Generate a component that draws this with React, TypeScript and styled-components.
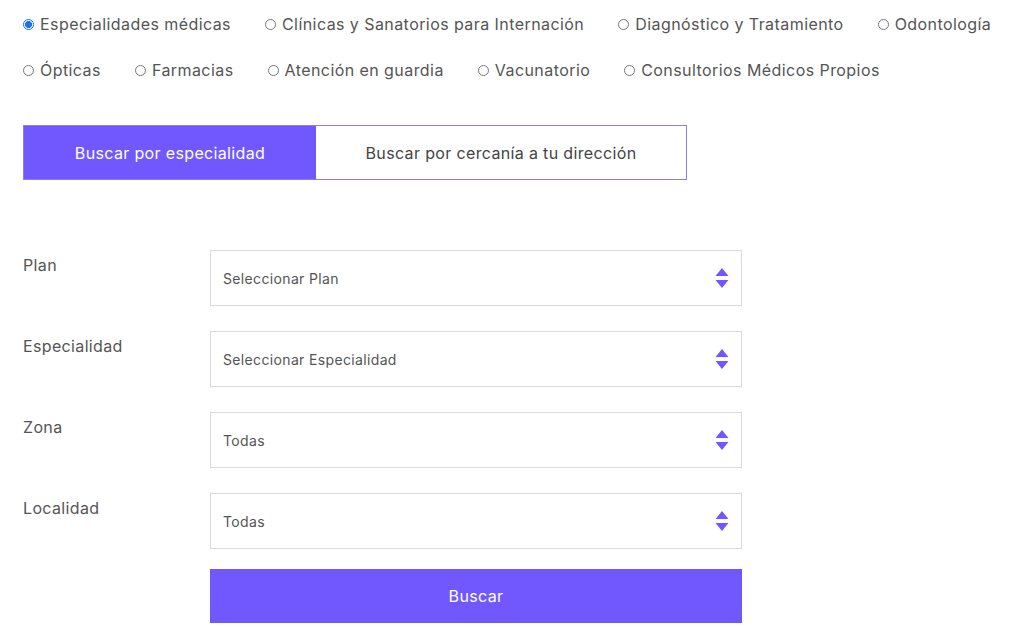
import React from "react";
import styled, { createGlobalStyle } from "styled-components";

const PURPLE = "#7058fe";

const Global = createGlobalStyle`
  html, body { margin: 0; padding: 0; background: #fff; }
  body { font-family: Inter, "Noto Sans", sans-serif; color: #555; letter-spacing: 0.35px; }
`;

const Page = styled.div`
  padding: 1px 23px 0 23px;
  width: 1024px;
  box-sizing: border-box;
`;

const RadioGroup = styled.div`
  display: flex;
  flex-direction: column;
`;

const RadioRow = styled.div`
  display: flex;
  align-items: center;
  height: 46px;
  gap: 34px;
`;

const RadioItem = styled.label`
  display: flex;
  align-items: center;
  gap: 6px;
  font-size: 16px;
  letter-spacing: 0.43px;
  color: #555;
  white-space: nowrap;
`;

const Dot = styled.span<{ $checked?: boolean }>`
  width: 11px;
  height: 11px;
  border-radius: 50%;
  box-sizing: border-box;
  border: 1px solid ${(p) => (p.$checked ? "#1a73e8" : "#777")};
  background: ${(p) => (p.$checked ? "radial-gradient(circle, #1a73e8 0 3.2px, #fff 3.8px)" : "#fff")};
  flex: none;
  margin-top: 1px;
`;

const Tabs = styled.div`
  display: flex;
  width: 664px;
  height: 55px;
  margin-top: 32px;
  border: 1px solid #8a7cf3;
  box-sizing: border-box;
`;

const Tab = styled.button<{ $active?: boolean; $w: number }>`
  width: ${(p) => p.$w}px;
  border: none;
  margin: 0;
  padding: 0;
  font-family: inherit;
  letter-spacing: inherit;
  font-size: 16px;
  background: ${(p) => (p.$active ? PURPLE : "#fff")};
  color: ${(p) => (p.$active ? "#fff" : "#444")};
  cursor: pointer;
`;

const Form = styled.form`
  display: flex;
  flex-direction: column;
  gap: 25px;
  margin-top: 70px;
`;

const Field = styled.div`
  display: flex;
  align-items: flex-start;
`;

const Label = styled.label`
  width: 187px;
  font-size: 16px;
  color: #555;
  padding-top: 5px;
`;

const Select = styled.div`
  width: 532px;
  height: 56px;
  box-sizing: border-box;
  border: 1px solid #d9d9d9;
  display: flex;
  align-items: center;
  justify-content: space-between;
  padding: 0 12px 0 12px;
  font-size: 14px;
  color: #555;
`;

const SubmitRow = styled.div`
  display: flex;
  padding-left: 187px;
  margin-top: -5px;
`;

const Submit = styled.button`
  width: 532px;
  height: 54px;
  border: none;
  background: ${PURPLE};
  color: #fff;
  font-family: inherit;
  letter-spacing: inherit;
  font-size: 16px;
`;

const Arrows = () => (
  <svg width="14" height="22" viewBox="0 0 14 22">
    <path d="M7 1 L13.5 9 L0.5 9 Z" fill={PURPLE} />
    <path d="M0.5 13 L13.5 13 L7 21 Z" fill={PURPLE} />
  </svg>
);

const row1 = [
  "Especialidades médicas",
  "Clínicas y Sanatorios para Internación",
  "Diagnóstico y Tratamiento",
  "Odontología",
];
const row2 = ["Ópticas", "Farmacias", "Atención en guardia", "Vacunatorio", "Consultorios Médicos Propios"];

const fields = [
  { label: "Plan", value: "Seleccionar Plan" },
  { label: "Especialidad", value: "Seleccionar Especialidad" },
  { label: "Zona", value: "Todas" },
  { label: "Localidad", value: "Todas" },
];

export default function App() {
  return (
    <>
      <Global />
      <Page>
        <RadioGroup>
          <RadioRow>
            {row1.map((t, i) => (
              <RadioItem key={t}>
                <Dot $checked={i === 0} />
                {t}
              </RadioItem>
            ))}
          </RadioRow>
          <RadioRow>
            {row2.map((t) => (
              <RadioItem key={t}>
                <Dot />
                {t}
              </RadioItem>
            ))}
          </RadioRow>
        </RadioGroup>
        <Tabs>
          <Tab $active $w={292}>Buscar por especialidad</Tab>
          <Tab $w={370}>Buscar por cercanía a tu dirección</Tab>
        </Tabs>
        <Form>
          {fields.map((f) => (
            <Field key={f.label}>
              <Label>{f.label}</Label>
              <Select>
                <span>{f.value}</span>
                <Arrows />
              </Select>
            </Field>
          ))}
          <SubmitRow>
            <Submit type="button">Buscar</Submit>
          </SubmitRow>
        </Form>
      </Page>
    </>
  );
}
